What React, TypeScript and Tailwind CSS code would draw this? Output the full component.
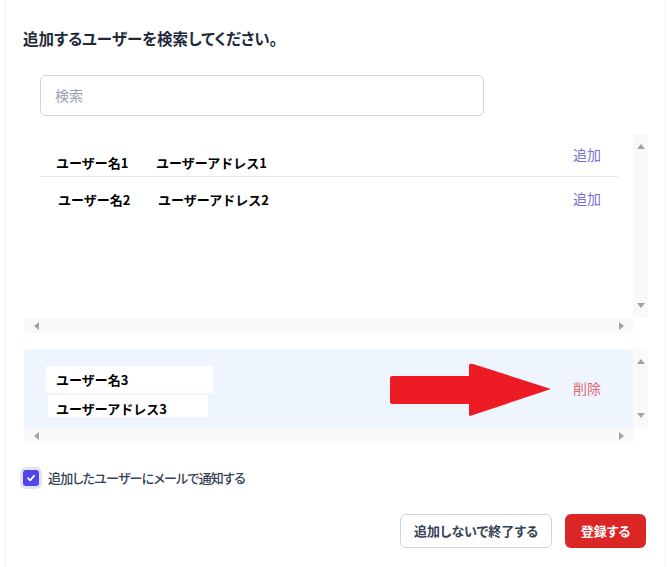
import React from 'react';

const jp = "font-['Noto_Sans_CJK_JP','Noto_Sans',sans-serif]";

function ArrowUp() {
  return <span className="block w-0 h-0 border-x-[4px] border-x-transparent border-b-[5px] border-b-[#a3a3a3]" />;
}
function ArrowDown() {
  return <span className="block w-0 h-0 border-x-[4px] border-x-transparent border-t-[5px] border-t-[#a3a3a3]" />;
}
function ArrowLeft() {
  return <span className="block w-0 h-0 border-y-[4px] border-y-transparent border-r-[5px] border-r-[#a3a3a3]" />;
}
function ArrowRight() {
  return <span className="block w-0 h-0 border-y-[4px] border-y-transparent border-l-[5px] border-l-[#a3a3a3]" />;
}

function VScroll() {
  return (
    <div className="w-[15px] bg-[#f9f9f9] flex flex-col items-center justify-between py-[10px]">
      <ArrowUp />
      <ArrowDown />
    </div>
  );
}

function HScroll() {
  return (
    <div className="flex">
      <div className="h-[15px] w-[609px] bg-[#f9f9f9] flex items-center justify-between pl-[10px] pr-[9px]">
        <ArrowLeft />
        <ArrowRight />
      </div>
    </div>
  );
}

export default function App() {
  return (
    <div className={`w-[671px] h-[567px] bg-white overflow-hidden ${jp}`}>
      <div className="h-full mx-[5px] border-x border-[#f1f1f1] pl-[17px] pr-[13px]">
        {/* Title */}
        <h1 className="pt-[27px] text-[15.5px] leading-[22px] font-semibold text-gray-800 [font-feature-settings:'palt']">
          追加するユーザーを検索してください。
        </h1>

        {/* Search */}
        <div className="mt-[26px] ml-[17px] w-[444px] h-[41px] border border-gray-300 rounded-md flex items-center px-[14px]">
          <span className="text-[14px] text-gray-400">検索</span>
        </div>

        {/* Result list */}
        <div className="mt-[18px] ml-[1px] w-[624px]">
          <div className="flex h-[184px]">
            <div className="w-[609px] bg-white">
              <div className="ml-[16px] w-[578px] h-[43px] border-b border-gray-200 flex justify-between">
                <div className="flex pt-[20px] pl-[16px] text-[13px] leading-[18px] font-bold text-black">
                  <span className="w-[100px]">ユーザー名1</span>
                  <span>ユーザーアドレス1</span>
                </div>
                <span className="pt-[10px] pr-[17px] text-[14px] leading-[20px] text-[#7a72d8]">追加</span>
              </div>
              <div className="ml-[16px] w-[578px] flex justify-between">
                <div className="flex pt-[14px] pl-[18px] text-[13px] leading-[18px] font-bold text-black">
                  <span className="w-[100px]">ユーザー名2</span>
                  <span>ユーザーアドレス2</span>
                </div>
                <span className="pt-[11px] pr-[17px] text-[14px] leading-[20px] text-[#7a72d8]">追加</span>
              </div>
            </div>
            <VScroll />
          </div>
          <HScroll />
        </div>

        {/* Selected list */}
        <div className="mt-[16px] ml-[1px] w-[624px]">
          <div className="flex h-[79px]">
            <div className="relative w-[609px] bg-[#eef5ff] flex justify-between">
              <div className="pl-[22px] pt-[17px] text-[13px] font-bold text-black">
                <div className="w-[167px] h-[27px] bg-white pl-[10px] leading-[27px]">ユーザー名3</div>
                <div className="mt-[2px] ml-[2px] w-[160px] h-[22px] bg-white pl-[8px] pt-[5px] leading-[18px] overflow-hidden">
                  ユーザーアドレス3
                </div>
              </div>
              <span className="pt-[29px] pr-[32px] text-[14px] leading-[20px] text-[#de6a72]">削除</span>
              <svg
                className="absolute left-[366px] top-[14px]"
                width="162"
                height="54"
                viewBox="0 0 162 54"
              >
                <path
                  d="M2 13 H79 V2 Q80 0 83 1 L161 26 L80 53 Q79 53 79 51 V41 H2 Q0 41 0 39 V15 Q0 13 2 13 Z"
                  fill="#ed1c24"
                />
              </svg>
            </div>
            <VScroll />
          </div>
          <HScroll />
        </div>

        {/* Notify checkbox */}
        <label className="mt-[26px] flex items-center gap-[9px]">
          <span className="w-[16px] h-[16px] rounded-[3px] bg-[#4f46e5] ring-[3px] ring-[#e2e1f8] flex items-center justify-center">
            <svg width="10" height="10" viewBox="0 0 10 10" fill="none">
              <path d="M2 5.2 L4.2 7.3 L8 2.8" stroke="white" strokeWidth="1.8" strokeLinecap="round" strokeLinejoin="round" />
            </svg>
          </span>
          <span className="text-[13px] leading-[18px] font-medium text-gray-700 tracking-[-0.06em] [font-feature-settings:'palt']">
            追加したユーザーにメールで通知する
          </span>
        </label>

        {/* Actions */}
        <div className="mt-[27px] flex justify-end gap-[13px] pr-[6px]">
          <button className="w-[152px] h-[34px] bg-white border border-gray-300 rounded-md text-[13px] font-semibold text-gray-700 [font-feature-settings:'palt']">
            追加しないで終了する
          </button>
          <button className="w-[81px] h-[34px] bg-[#dc2626] rounded-md text-[13px] font-semibold text-white [font-feature-settings:'palt']">
            登録する
          </button>
        </div>
      </div>
    </div>
  );
}
